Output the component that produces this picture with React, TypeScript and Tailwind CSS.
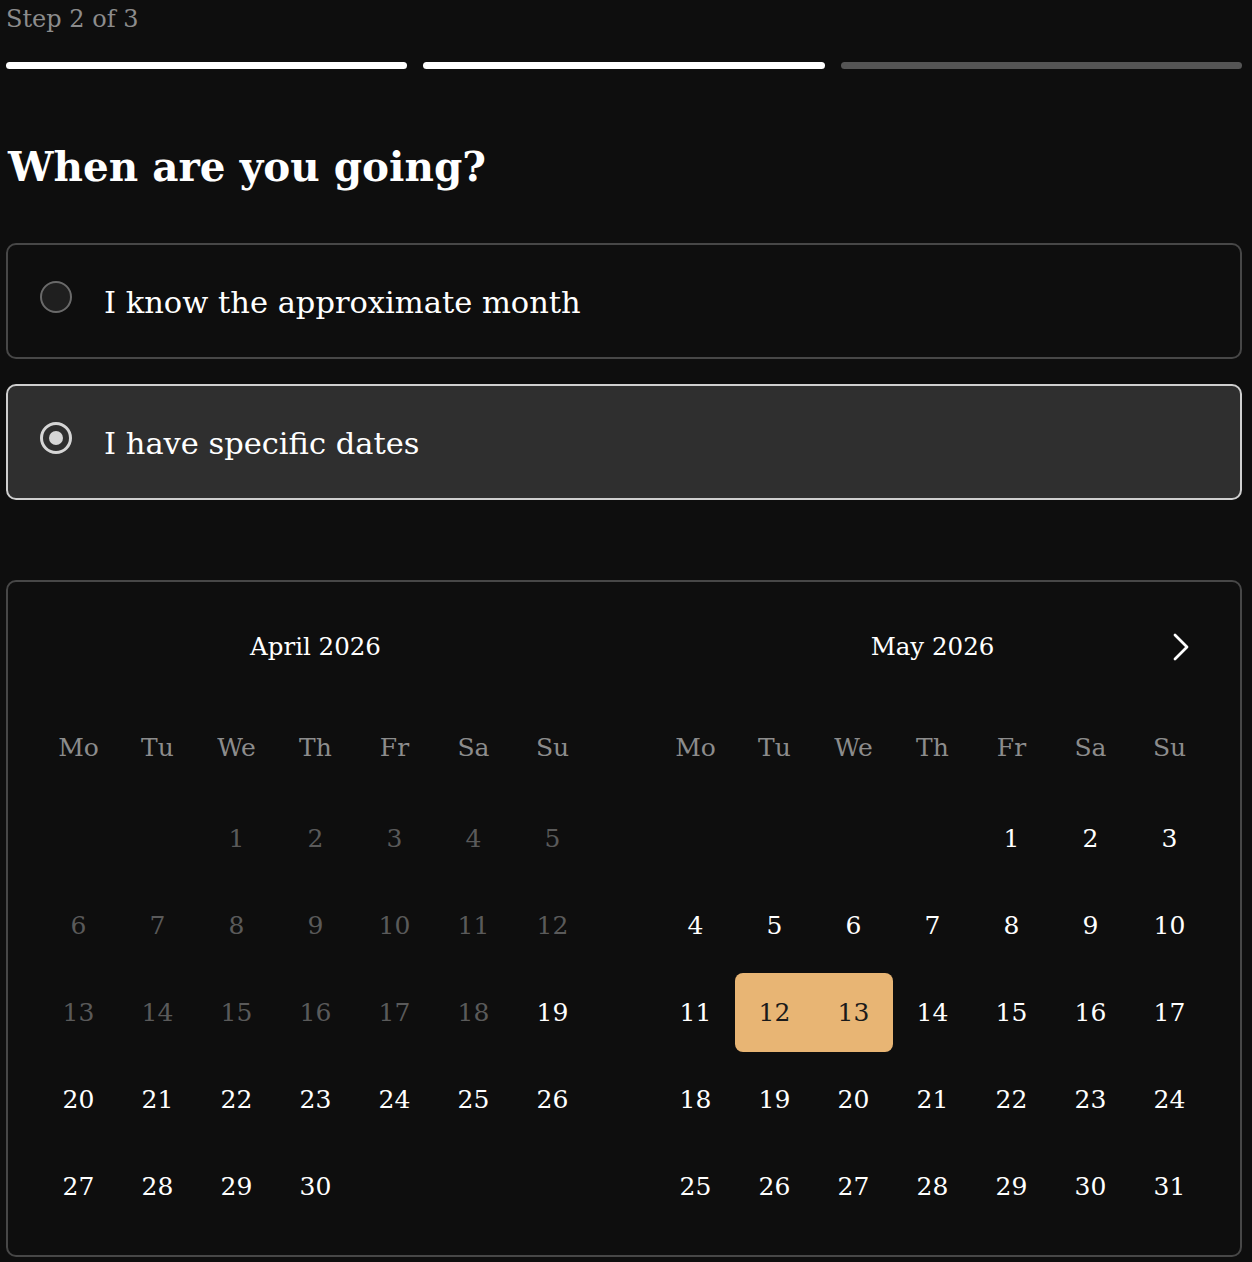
import React from "react";
import { ChevronRight } from "lucide-react";

const serif = { fontFamily: '"DejaVu Serif", "Liberation Serif", serif' };

const WEEKDAYS = ["Mo", "Tu", "We", "Th", "Fr", "Sa", "Su"];

type Month = {
  title: string;
  offset: number;
  days: number;
  disabledBefore: number;
  selected: number[];
};

const months: Month[] = [
  { title: "April 2026", offset: 2, days: 30, disabledBefore: 19, selected: [] },
  { title: "May 2026", offset: 4, days: 31, disabledBefore: 0, selected: [12, 13] },
];

const MonthGrid = ({ month, showNext }: { month: Month; showNext?: boolean }) => {
  const cells: (number | null)[] = [];
  for (let i = 0; i < month.offset; i++) cells.push(null);
  for (let d = 1; d <= month.days; d++) cells.push(d);
  while (cells.length % 7 !== 0) cells.push(null);

  const rows: (number | null)[][] = [];
  for (let i = 0; i < cells.length; i += 7) rows.push(cells.slice(i, i + 7));

  return (
    <div className="w-[553px]">
      <div className="relative flex h-[70px] items-center justify-center">
        <p className="text-[24.5px] text-white">{month.title}</p>
        {showNext && (
          <button className="absolute right-[4px] top-[11px] text-white">
            <ChevronRight size={48} strokeWidth={1.4} />
          </button>
        )}
      </div>
      <div className="mt-[26px] grid grid-cols-7">
        {WEEKDAYS.map((w) => (
          <div key={w} className="flex h-[79px] items-center justify-center text-[25px] text-[#8c8c8c]">
            {w}
          </div>
        ))}
      </div>
      <div className="mt-[12px] flex flex-col gap-[8px]">
        {rows.map((row, ri) => (
          <div key={ri} className="grid grid-cols-7">
            {row.map((d, ci) => {
              if (d === null) return <div key={ci} className="h-[79px]" />;
              const sel = month.selected.includes(d);
              const first = sel && !month.selected.includes(d - 1);
              const last = sel && !month.selected.includes(d + 1);
              const disabled = d < month.disabledBefore;
              return (
                <div
                  key={ci}
                  className={
                    "flex h-[79px] items-center justify-center text-[25px] " +
                    (sel
                      ? "bg-[#e8b574] text-[#1a1a1a] " +
                        (first ? "rounded-l-[8px] " : "") +
                        (last ? "rounded-r-[8px]" : "")
                      : disabled
                      ? "text-[#5a5a5a]"
                      : "text-white")
                  }
                >
                  {d}
                </div>
              );
            })}
          </div>
        ))}
      </div>
    </div>
  );
};

const RadioCard = ({ label, checked }: { label: string; checked?: boolean }) => (
  <div
    className={
      "flex h-[116px] items-center rounded-[10px] border-2 pl-[32px] " +
      (checked ? "border-[#cfcfcf] bg-[#2f2f2f]" : "border-[#474747] bg-[#0e0e0e]")
    }
  >
    {checked ? (
      <span className="mb-[8px] flex h-[32px] w-[32px] items-center justify-center rounded-full border-[3px] border-[#d6d6d6]">
        <span className="h-[14px] w-[14px] rounded-full bg-[#d6d6d6]" />
      </span>
    ) : (
      <span className="mb-[8px] h-[32px] w-[32px] rounded-full border-2 border-[#6a6a6a] bg-[#1f1f1f]" />
    )}
    <span className="ml-[32px] pt-[4px] text-[30.5px] text-white">{label}</span>
  </div>
);

export default function App() {
  return (
    <div className="min-h-[1262px] bg-[#0e0e0e] pl-[6px] pr-[10px]" style={serif}>
      <p className="text-[24px] leading-[38px] text-[#8c8c8c]">Step 2 of 3</p>
      <div className="mt-[24px] flex gap-[16px]">
        <div className="h-[7px] flex-1 rounded-full bg-white" />
        <div className="h-[7px] flex-1 rounded-full bg-white" />
        <div className="h-[7px] flex-1 rounded-full bg-[#555555]" />
      </div>
      <h1 className="mt-[68px] pl-[2px] text-[40.5px] font-bold leading-[60px] text-white">When are you going?</h1>
      <div className="mt-[46px] flex flex-col gap-[25px]">
        <RadioCard label="I know the approximate month" />
        <RadioCard label="I have specific dates" checked />
      </div>
      <div className="mt-[80px] flex justify-between rounded-[10px] border-2 border-[#474747] px-[31px] pb-[29px] pt-[30px]">
        <MonthGrid month={months[0]} />
        <MonthGrid month={months[1]} showNext />
      </div>
    </div>
  );
}
